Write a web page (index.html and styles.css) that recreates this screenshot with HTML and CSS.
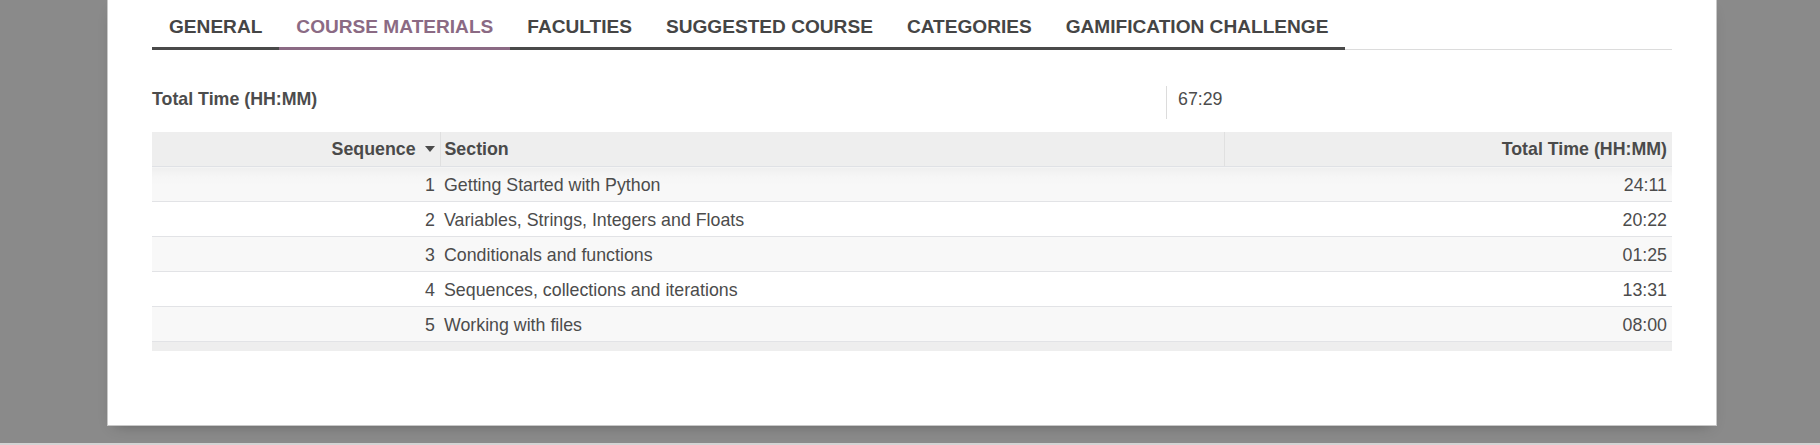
FILE: index.html
```html
<!DOCTYPE html>
<html>
<head>
<meta charset="utf-8">
<link rel="stylesheet" href="styles.css">
</head>
<body>
<div class="page">
  <div class="sheet">
    <ul class="tabs">
      <li class="tab">GENERAL</li>
      <li class="tab active">COURSE MATERIALS</li>
      <li class="tab">FACULTIES</li>
      <li class="tab">SUGGESTED COURSE</li>
      <li class="tab">CATEGORIES</li>
      <li class="tab">GAMIFICATION CHALLENGE</li>
    </ul>
    <div class="field-group">
      <div class="field-label">Total Time (HH:MM)</div>
      <div class="field-value">67:29</div>
    </div>
    <table class="list">
      <colgroup>
        <col class="c-seq">
        <col class="c-sec">
        <col class="c-tot">
      </colgroup>
      <thead>
        <tr>
          <th class="num">Sequence <span class="caret"></span></th>
          <th class="txt">Section</th>
          <th class="num last">Total Time (HH:MM)</th>
        </tr>
      </thead>
      <tbody>
        <tr class="odd first"><td class="num">1</td><td class="txt">Getting Started with Python</td><td class="num last">24:11</td></tr>
        <tr><td class="num">2</td><td class="txt">Variables, Strings, Integers and Floats</td><td class="num last">20:22</td></tr>
        <tr class="odd"><td class="num">3</td><td class="txt">Conditionals and functions</td><td class="num last">01:25</td></tr>
        <tr><td class="num">4</td><td class="txt">Sequences, collections and iterations</td><td class="num last">13:31</td></tr>
        <tr class="odd"><td class="num">5</td><td class="txt">Working with files</td><td class="num last">08:00</td></tr>
      </tbody>
      <tfoot>
        <tr><td></td><td></td><td></td></tr>
      </tfoot>
    </table>
  </div>
  <div class="bottom-strip"></div>
</div>
</body>
</html>
```
FILE: styles.css
```css
html, body {
  margin: 0;
  padding: 0;
}
body {
  background: #8a8a8a;
  font-family: "Liberation Sans", Arial, sans-serif;
  color: #4c4c4c;
  width: 1820px;
  height: 445px;
  overflow: hidden;
}
.page {
  display: flex;
  flex-direction: column;
  height: 445px;
}
.sheet {
  box-sizing: border-box;
  margin-left: 107px;
  width: 1610px;
  height: 426px;
  background: #fff;
  border: 1px solid #c8c8c8;
  border-top: none;
  padding: 0 44px;
  box-shadow: 0 6px 14px -8px rgba(0,0,0,0.35);
}
.bottom-strip {
  margin-top: auto;
  height: 2px;
  background: #d4d4d4;
}
.tabs {
  list-style: none;
  margin: 0;
  padding: 0;
  display: flex;
  border-bottom: 1px solid #dcdcdc;
}
.tab {
  font-size: 19.1px;
  line-height: 21px;
  font-weight: bold;
  color: #454545;
  padding: 16px 17px 10px;
  border-bottom: 3px solid #4a4a4a;
  margin-bottom: -1px;
  white-space: nowrap;
}
.tab.active {
  color: #8b6a84;
  border-bottom-color: #8b6a84;
}
.field-group {
  display: grid;
  grid-template-columns: 1014px 1fr;
  margin-top: 36px;
  font-size: 17.8px;
  line-height: 21px;
}
.field-label {
  font-weight: bold;
  padding: 3px 0 9px 0;
  color: #4c4c4c;
}
.field-value {
  border-left: 1px solid #dcdcdc;
  padding: 3px 0 9px 11px;
}
.list {
  margin-top: 13px;
  width: 1520px;
  border-collapse: collapse;
  table-layout: fixed;
  font-size: 17.8px;
  line-height: 21px;
}
.c-seq { width: 288px; }
.c-sec { width: 784px; }
.c-tot { width: 448px; }
.list th, .list td {
  padding: 6.5px 5px 6.5px 5px;
  white-space: nowrap;
  overflow: hidden;
}
.list tbody td {
  padding-top: 7.5px;
  padding-bottom: 5.5px;
}
.list thead th {
  background: #eeeeee;
  font-weight: bold;
  color: #4a4a4a;
  border-bottom: 1px solid #dfe1e5;
  border-right: 1px solid #e0e0e0;
}
.list thead th.last {
  border-right: none;
}
.list tbody td {
  border-bottom: 1px solid #e2e3e6;
  color: #4c4c4c;
}
.list tbody tr.odd td {
  background: #f8f8f8;
}
.list tbody tr.first td {
  background: linear-gradient(to bottom, #efefef 0px, #f6f6f6 10px, #f8f8f8 20px);
}
.list tfoot td {
  background: #eeeeee;
  height: 9px;
  padding: 0;
}
.num { text-align: right; }
.txt { text-align: left; }
.list td.txt, .list th.txt { padding-left: 4px; }
.caret {
  display: inline-block;
  width: 0;
  height: 0;
  border-left: 5.5px solid transparent;
  border-right: 5.5px solid transparent;
  border-top: 6px solid #4a4a4a;
  vertical-align: middle;
  margin-left: 4px;
  position: relative;
  top: -1px;
}
```
